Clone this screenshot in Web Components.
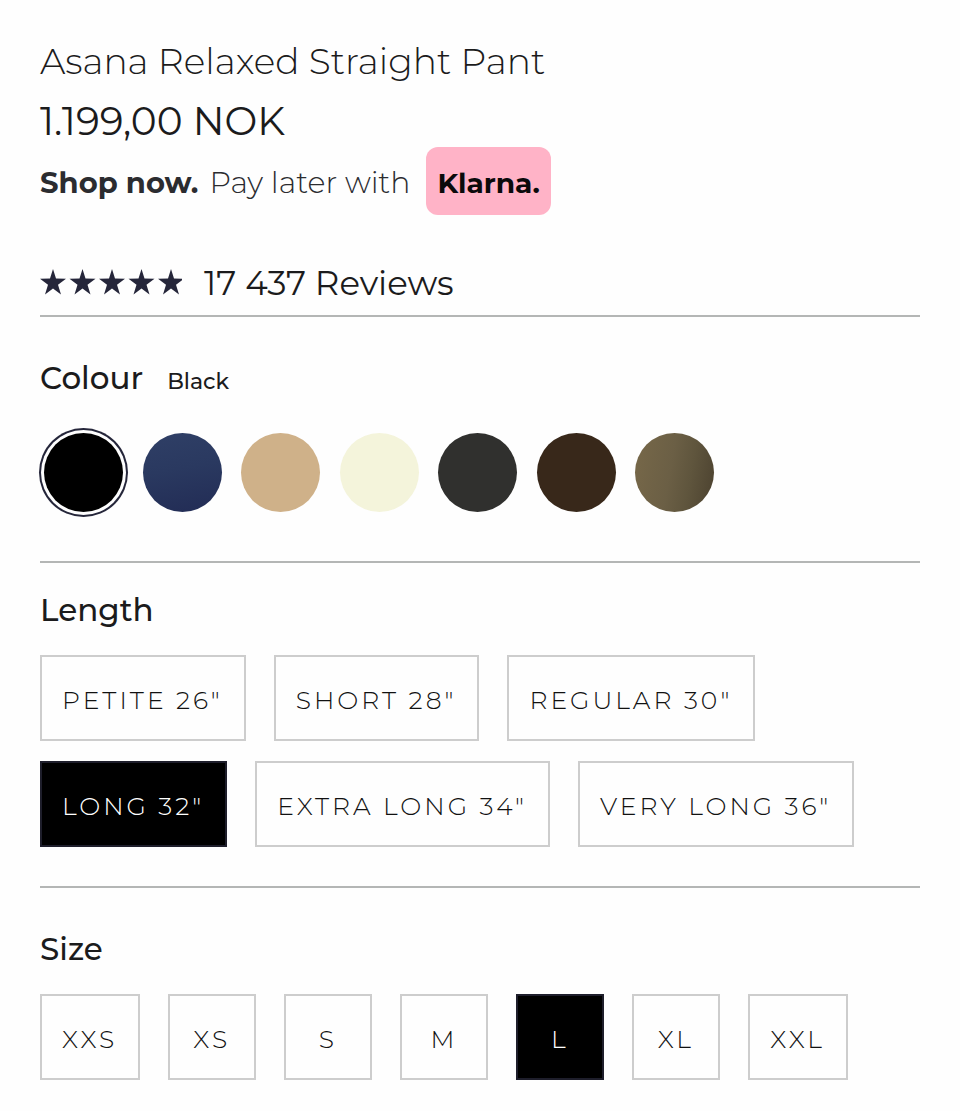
<!DOCTYPE html>
<html lang="en">
<head>
<meta charset="utf-8">
<meta name="viewport" content="width=device-width, initial-scale=1">
<title>Asana Relaxed Straight Pant</title>
<style>
  body { margin: 0; background: #fefefe; color: #1b1b1c; font-family: Montserrat, Inter, "Open Sans", sans-serif; }
</style>
</head>
<body>
<product-panel>
  <product-heading slot="heading" price="1.199,00 NOK">Asana Relaxed Straight Pant</product-heading>
  <pay-later slot="heading"></pay-later>
  <star-rating slot="heading">17 437 Reviews</star-rating>
  <option-section label="Colour" value="Black">
    <swatch-group></swatch-group>
  </option-section>
  <option-section class="tight" label="Length">
    <chip-group name="length" label="Length" options='Petite 26"|Short 28"|Regular 30"|Long 32"|Extra long 34"|Very long 36"' selected='Long 32"'></chip-group>
  </option-section>
  <option-section label="Size">
    <chip-group name="size" label="Size" options="XXS|XS|S|M|L|XL|XXL" selected="L"></chip-group>
  </option-section>
</product-panel>

<script>
class Base extends HTMLElement {
  connectedCallback() {
    if (this.shadowRoot) return;
    this.attachShadow({ mode: "open" }).innerHTML =
      `<style>*{box-sizing:border-box}${this.css()}</style>${this.html()}`;
  }
}

customElements.define("product-panel", class extends Base {
  css() { return `:host{display:block;padding:37px 40px 30px}`; }
  html() { return `<main><slot name="heading"></slot><slot></slot></main>`; }
});

customElements.define("product-heading", class extends Base {
  css() { return `
    :host{display:block}
    h1{margin:0;font-size:36px;line-height:48px;font-weight:300}
    p{margin:12px 0 0;font-size:39px;line-height:48px;font-weight:400}`; }
  html() { return `<h1><slot></slot></h1><p>${this.getAttribute("price")}</p>`; }
});

customElements.define("pay-later", class extends Base {
  css() { return `
    :host{display:block;margin-top:2px}
    p{display:flex;align-items:baseline;margin:0;font-size:30px;line-height:36px;font-weight:300;color:#2b2c30}
    strong{font-weight:700;font-size:29px;margin-right:11px}
    .badge{margin-left:16px;padding:18px 11px 14px;border-radius:12px;background:#ffb3c7;color:#0b0a0b;font-size:28px;font-weight:700}`; }
  html() { return `<p><strong>Shop now.</strong><span>Pay later with</span><span class="badge">Klarna.</span></p>`; }
});

customElements.define("star-rating", class extends Base {
  css() { return `
    :host{display:flex;align-items:baseline;gap:22px;margin-top:48px;font-size:34px;line-height:40px;font-weight:400}
    svg{flex:none;width:142px;height:26px;fill:#25263a}`; }
  html() {
    const star = "13,0 16,9.6 26,9.8 18,15.8 21,25.5 13,19.6 5,25.5 8,15.8 0,9.8 10,9.6";
    const stars = [0, 1, 2, 3, 4].map(i => `<polygon transform="translate(${i * 29.5} 0)" points="${star}"/>`).join("");
    return `<svg viewBox="0 0 142 26" role="img" aria-label="Rated nearly 5 out of 5">${stars}</svg><span><slot></slot></span>`;
  }
});

customElements.define("option-section", class extends Base {
  css() { return `
    :host{display:block;border-top:2px solid #b4b6b5;padding-top:41px;margin-top:39px}
    :host(:first-of-type){margin-top:12px;padding-bottom:10px}
    :host(.tight){padding-top:27px}
    h2{display:flex;align-items:baseline;gap:24px;margin:0 0 25px;font-size:31px;line-height:40px;font-weight:500}
    h2 span{font-size:22px}`; }
  html() {
    const v = this.getAttribute("value");
    return `<h2>${this.getAttribute("label")}${v ? `<span>${v}</span>` : ""}</h2><slot></slot>`;
  }
});

customElements.define("swatch-group", class extends Base {
  css() { return `
    :host{display:block;padding:6px 4px 0}
    fieldset{display:flex;flex-wrap:wrap;justify-content:space-between;max-width:670px;min-width:0;margin:0;padding:0;border:0}
    input{appearance:none;width:79px;height:79px;margin:0;border-radius:50%;background:var(--c);cursor:pointer}
    input:checked{box-shadow:0 0 0 3px #fefefe,0 0 0 5px #25263a}`; }
  html() {
    return `<fieldset aria-label="Colour">` + [
      ["Black", "#000"],
      ["Navy", "linear-gradient(170deg,#2f3f66 0%,#2a3960 45%,#222c55 100%)"],
      ["Tan", "#cfb189"],
      ["Cream", "#f4f4db"],
      ["Charcoal", "#30302e"],
      ["Brown", "#38281a"],
      ["Olive", "linear-gradient(100deg,#776849 0%,#6b5f45 45%,#5f553d 68%,#4b412f 100%)"]
    ].map(([n, c], i) => `<input type="radio" name="colour" aria-label="${n}" style="--c:${c}"${i ? "" : " checked"}>`).join("") + `</fieldset>`;
  }
});

customElements.define("chip-group", class extends Base {
  css() { return `
    :host{display:block}
    fieldset{display:flex;flex-wrap:wrap;gap:20px 28px;min-width:0;margin:0;padding:0;border:0}
    label{position:relative;min-width:88px;padding:23px 21px 19px 20px;border:2px solid #cdcdcd;text-align:center;color:#111;
      text-transform:uppercase;font-size:25px;line-height:40px;font-weight:300;letter-spacing:3px;cursor:pointer}
    label:has(input:checked){background:#000;border-color:#1e1e2b;color:#fff}
    input{position:absolute;inset:0;width:100%;height:100%;margin:0;opacity:0;cursor:pointer}`; }
  html() {
    const sel = this.getAttribute("selected");
    return `<fieldset aria-label="${this.getAttribute("label")}">` + this.getAttribute("options").split("|").map(o =>
      `<label><input type="radio" name="${this.getAttribute("name")}"${o === sel ? " checked" : ""}>${o}</label>`).join("") + `</fieldset>`;
  }
});
</script>
</body>
</html>
